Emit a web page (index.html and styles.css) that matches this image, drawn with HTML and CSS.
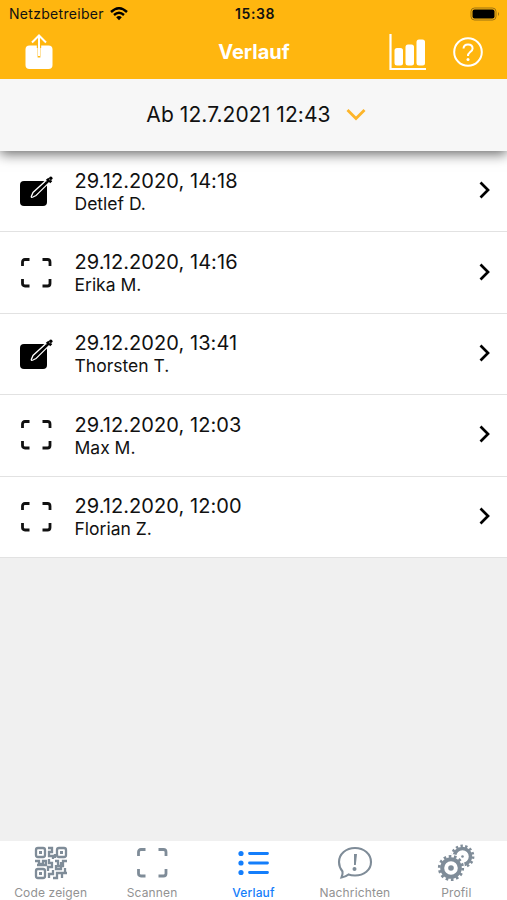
FILE: index.html
```html
<!DOCTYPE html>
<html lang="de">
<head>
    <meta charset="UTF-8">
    <meta name="viewport" content="width=device-width, initial-scale=1.0">
    <title>Verlauf</title>
    <link rel="stylesheet" href="styles.css">
</head>
<body>

<!-- Wiederverwendete Icons -->
<svg class="sprite" width="0" height="0">
    <symbol id="scan" viewBox="0 0 32 32">
        <path d="M2.500 9V5Q2.500 2.500 5 2.500H9.500M22.500 2.500H27.500Q30 2.500 30 5V9M30 22V26.500Q30 29 27.500 29H22.500M9.500 29H5Q2.500 29 2.500 26.500V22" fill="none" stroke="currentColor" stroke-width="2.800"/>
    </symbol>
    <symbol id="edit" viewBox="0 0 34 34">
        <rect x="0" y="7" width="27" height="25" rx="4" fill="#000"/>
        <path d="M25.500 7L13 18.500L11.300 22.500Q11.200 23.800 13 23L16 21.500L29 8.500" fill="#000" stroke="#fff" stroke-width="1.300"/>
        <path d="M26.500 6.500L29 4.500M29.500 8.500L31.500 6.500M15 20L29.500 6" stroke="#000" stroke-width="2"/>
        <circle cx="30.800" cy="4.300" r="1.700" fill="#000"/>
    </symbol>
    <symbol id="next" viewBox="0 0 12 18">
        <path d="M1.500 1.500L9 9L1.500 16.500" fill="none" stroke="#000" stroke-width="2.700"/>
    </symbol>
</svg>

<header class="header">
    <div class="status-bar">
        <div class="carrier">
            <span>Netzbetreiber</span>
            <svg width="18" height="14" viewBox="0 0 18 14">
                <path d="M1 5Q9-2.500 17 5M4 8Q9 3.500 14 8" fill="none" stroke="#000" stroke-width="2.400"/>
                <path d="M6.200 10.200Q9 7.900 11.800 10.200L9 13.200Z"/>
            </svg>
        </div>
        <span class="time">15:38</span>
        <svg class="battery" width="31" height="14" viewBox="0 0 31 14">
            <rect x="1" y="1" width="25" height="12" rx="3.500" fill="none" stroke="#9c7213"/>
            <rect x="2.500" y="2.500" width="22" height="9" rx="2"/>
            <path d="M28 5Q30 7 28 9Z" fill="#9c7213"/>
        </svg>
    </div>
    <div class="nav-bar">
        <svg class="share" width="28" height="36" viewBox="0 0 28 36">
            <rect x="0.500" y="11.500" width="27" height="23.500" rx="4" fill="#fff"/>
            <path d="M11.800 11V14H12.600V23.500H15.400V14H16.200V11Z" fill="#ffb60f"/>
            <path d="M14 22V1.500M7 8.500L14 1.500L21 8.500" fill="none" stroke="#fff" stroke-width="2"/>
        </svg>
        <h1>Verlauf</h1>
        <div class="nav-actions">
            <svg width="38" height="38" viewBox="0 0 38 38">
                <path d="M1.500 1V36H37" fill="none" stroke="#fff" stroke-width="2.200"/>
                <g fill="#fff">
                    <rect x="5.500" y="15" width="8.500" height="17.500" rx="2.500"/>
                    <rect x="16.500" y="11.500" width="8.500" height="21" rx="2.500"/>
                    <rect x="27.500" y="6.500" width="8.500" height="26" rx="2.500"/>
                </g>
            </svg>
            <svg width="30" height="30" viewBox="0 0 30 30">
                <circle cx="15" cy="15" r="13.800" fill="none" stroke="#fff" stroke-width="2"/>
                <path d="M10.500 11.500Q10.800 7.500 15 7.500Q19.600 7.500 19.600 11.500Q19.600 13.500 17 15.200Q15 16.600 15 19" fill="none" stroke="#fff" stroke-width="2"/>
                <circle cx="15" cy="22.400" r="1.500" fill="#fff"/>
            </svg>
        </div>
    </div>
</header>

<div class="filter">
    <span>Ab 12.7.2021 12:43</span>
    <svg width="20" height="13" viewBox="0 0 20 13">
        <path d="M1.500 2L10 10.500L18.500 2" fill="none" stroke="#fdb52a" stroke-width="2.800"/>
    </svg>
</div>

<ul class="list">
    <li class="entry">
        <svg class="entry-icon"><use href="#edit"/></svg>
        <div class="entry-text">
            <div class="date">29.12.2020, 14:18</div>
            <div class="name">Detlef D.</div>
        </div>
        <svg class="next"><use href="#next"/></svg>
    </li>
    <li class="entry">
        <svg class="entry-icon scan"><use href="#scan"/></svg>
        <div class="entry-text">
            <div class="date">29.12.2020, 14:16</div>
            <div class="name">Erika M.</div>
        </div>
        <svg class="next"><use href="#next"/></svg>
    </li>
    <li class="entry">
        <svg class="entry-icon"><use href="#edit"/></svg>
        <div class="entry-text">
            <div class="date">29.12.2020, 13:41</div>
            <div class="name">Thorsten T.</div>
        </div>
        <svg class="next"><use href="#next"/></svg>
    </li>
    <li class="entry">
        <svg class="entry-icon scan"><use href="#scan"/></svg>
        <div class="entry-text">
            <div class="date">29.12.2020, 12:03</div>
            <div class="name">Max M.</div>
        </div>
        <svg class="next"><use href="#next"/></svg>
    </li>
    <li class="entry">
        <svg class="entry-icon scan"><use href="#scan"/></svg>
        <div class="entry-text">
            <div class="date">29.12.2020, 12:00</div>
            <div class="name">Florian Z.</div>
        </div>
        <svg class="next"><use href="#next"/></svg>
    </li>
</ul>

<nav class="tab-bar">
    <div class="tab">
        <svg width="34" height="34" viewBox="0 0 34 34">
            <g fill="none" stroke="currentColor" stroke-width="2.300">
                <rect x="2" y="2" width="9" height="9" rx="2"/>
                <rect x="23" y="2" width="9" height="9" rx="2"/>
                <rect x="2" y="23" width="9" height="9" rx="2"/>
                <path d="M14 2H18V6H15V10H19V13M1 15H5V18H9V15H12V19H3M15 13V17H18V21H14V25M21 15H24V20H29V15H33M21 8V12M27 16V23H22V19M15 32V28H19V24M19 32H23V27H28V32M26 27H33M31 22V26M28 32V29"/>
            </g>
            <path d="M5 5h3v3H5zM26 5h3v3h-3zM5 26h3v3H5z" fill="currentColor"/>
        </svg>
        <span>Code zeigen</span>
    </div>
    <div class="tab">
        <svg width="32" height="32"><use href="#scan"/></svg>
        <span>Scannen</span>
    </div>
    <div class="tab active">
        <svg width="32" height="32" viewBox="0 0 32 32">
            <g fill="currentColor">
                <circle cx="4" cy="6.500" r="2.600"/>
                <circle cx="4" cy="16" r="2.600"/>
                <circle cx="4" cy="25.500" r="2.600"/>
            </g>
            <path d="M12.500 6.500H30.500M12.500 16H30.500M12.500 25.500H30.500" stroke="currentColor" stroke-width="2.800" stroke-linecap="round"/>
        </svg>
        <span>Verlauf</span>
    </div>
    <div class="tab">
        <svg width="36" height="34" viewBox="0 0 36 34">
            <path d="M4.500 31.500Q6 28 5.500 25.500Q2 21 2 16C2 8 9 2 18 2S34 8 34 16S27 29.500 18 29.500Q14 29.500 11.500 28.500Q8.500 31 4.500 31.500Z" fill="none" stroke="currentColor" stroke-width="2.100"/>
            <path d="M17 8H20L18.800 19H17Z" fill="currentColor"/>
            <circle cx="17.500" cy="23" r="2" fill="currentColor"/>
        </svg>
        <span>Nachrichten</span>
    </div>
    <div class="tab">
        <svg width="38" height="38" viewBox="0 0 38 38">
            <g fill="none" stroke="currentColor">
                <circle cx="25.500" cy="12.500" r="8" stroke-width="3.500"/>
                <circle cx="25.500" cy="12.500" r="10.500" stroke-width="2.800" stroke-dasharray="2.356 2.356"/>
                <circle cx="14" cy="24" r="12.500" fill="#fff" stroke="#fff" stroke-width="3"/>
                <circle cx="14" cy="24" r="8.800" stroke-width="4"/>
                <circle cx="14" cy="24" r="11.700" stroke-width="2.800" stroke-dasharray="2.626 2.625"/>
            </g>
            <circle cx="14" cy="24" r="2.800" fill="currentColor"/>
            <circle cx="25.500" cy="12.500" r="1.300" fill="currentColor"/>
        </svg>
        <span>Profil</span>
    </div>
</nav>

</body>
</html>
```
FILE: styles.css
```css
* {
    box-sizing: border-box;
}
body {
    margin: 0;
    height: 900px;
    display: flex;
    flex-direction: column;
    background-color: #f0f0f0;
    font-family: Inter, "Liberation Sans", sans-serif;
    color: #111;
}
svg {
    display: block;
    flex: none;
}
.sprite {
    position: absolute;
}
.header {
    height: 79px;
    background-color: #ffb60f;
    position: relative;
    z-index: 2;
}
.status-bar {
    display: grid;
    grid-template-columns: 1fr auto 1fr;
    align-items: center;
    height: 27px;
    padding: 0 6px 0 9px;
    font-size: 14px;
}
.carrier {
    display: flex;
    align-items: center;
    gap: 6px;
    letter-spacing: 0.3px;
}
.time {
    font-weight: 600;
    letter-spacing: 0.6px;
}
.battery {
    justify-self: end;
}
.nav-bar {
    display: grid;
    grid-template-columns: 1fr auto 1fr;
    align-items: center;
    height: 50px;
    padding: 0 24px 0 25px;
}
.nav-bar h1 {
    margin: 0;
    color: #fff;
    font-size: 20px;
    font-weight: 700;
}
.nav-actions {
    display: flex;
    justify-content: flex-end;
    align-items: center;
    gap: 26px;
}
.filter {
    display: flex;
    justify-content: center;
    align-items: center;
    gap: 15px;
    height: 72px;
    padding: 0 0 1px 5px;
    background-color: #f7f7f7;
    font-size: 21px;
    letter-spacing: 0.08px;
    box-shadow: 0 3px 12px rgba(0, 0, 0, 0.6);
    position: relative;
    z-index: 1;
}
.list {
    margin: 0;
    padding: 0;
    list-style: none;
    background-color: #fff;
}
.entry {
    display: flex;
    align-items: center;
    height: 81.4px;
    padding: 0 16px 0 20px;
    border-bottom: 1px solid #e2e2e2;
}
.entry-icon {
    width: 34px;
    height: 34px;
}
.entry-icon.scan {
    width: 32px;
    height: 32px;
    margin-right: 2px;
}
.entry-text {
    flex: 1;
    margin-left: 20.5px;
    padding-top: 1px;
}
.date {
    font-size: 20px;
    line-height: 24px;
    letter-spacing: 0.06px;
}
.name {
    font-size: 17.5px;
    line-height: 22px;
}
.next {
    width: 12px;
    height: 18px;
    margin-bottom: 2px;
}
.tab-bar {
    display: grid;
    grid-template-columns: repeat(5, 1fr);
    height: 59px;
    margin-top: auto;
    background-color: #fff;
}
.tab {
    display: grid;
    grid-template-rows: 44px 15px;
    justify-items: center;
    align-items: center;
    color: #7f8c98;
    font-size: 12px;
    letter-spacing: 0.15px;
}
.tab span {
    line-height: 15px;
    color: #929292;
}
.tab.active, .tab.active span {
    color: #147efb;
}
.tab.active span {
    font-weight: 500;
}
```
